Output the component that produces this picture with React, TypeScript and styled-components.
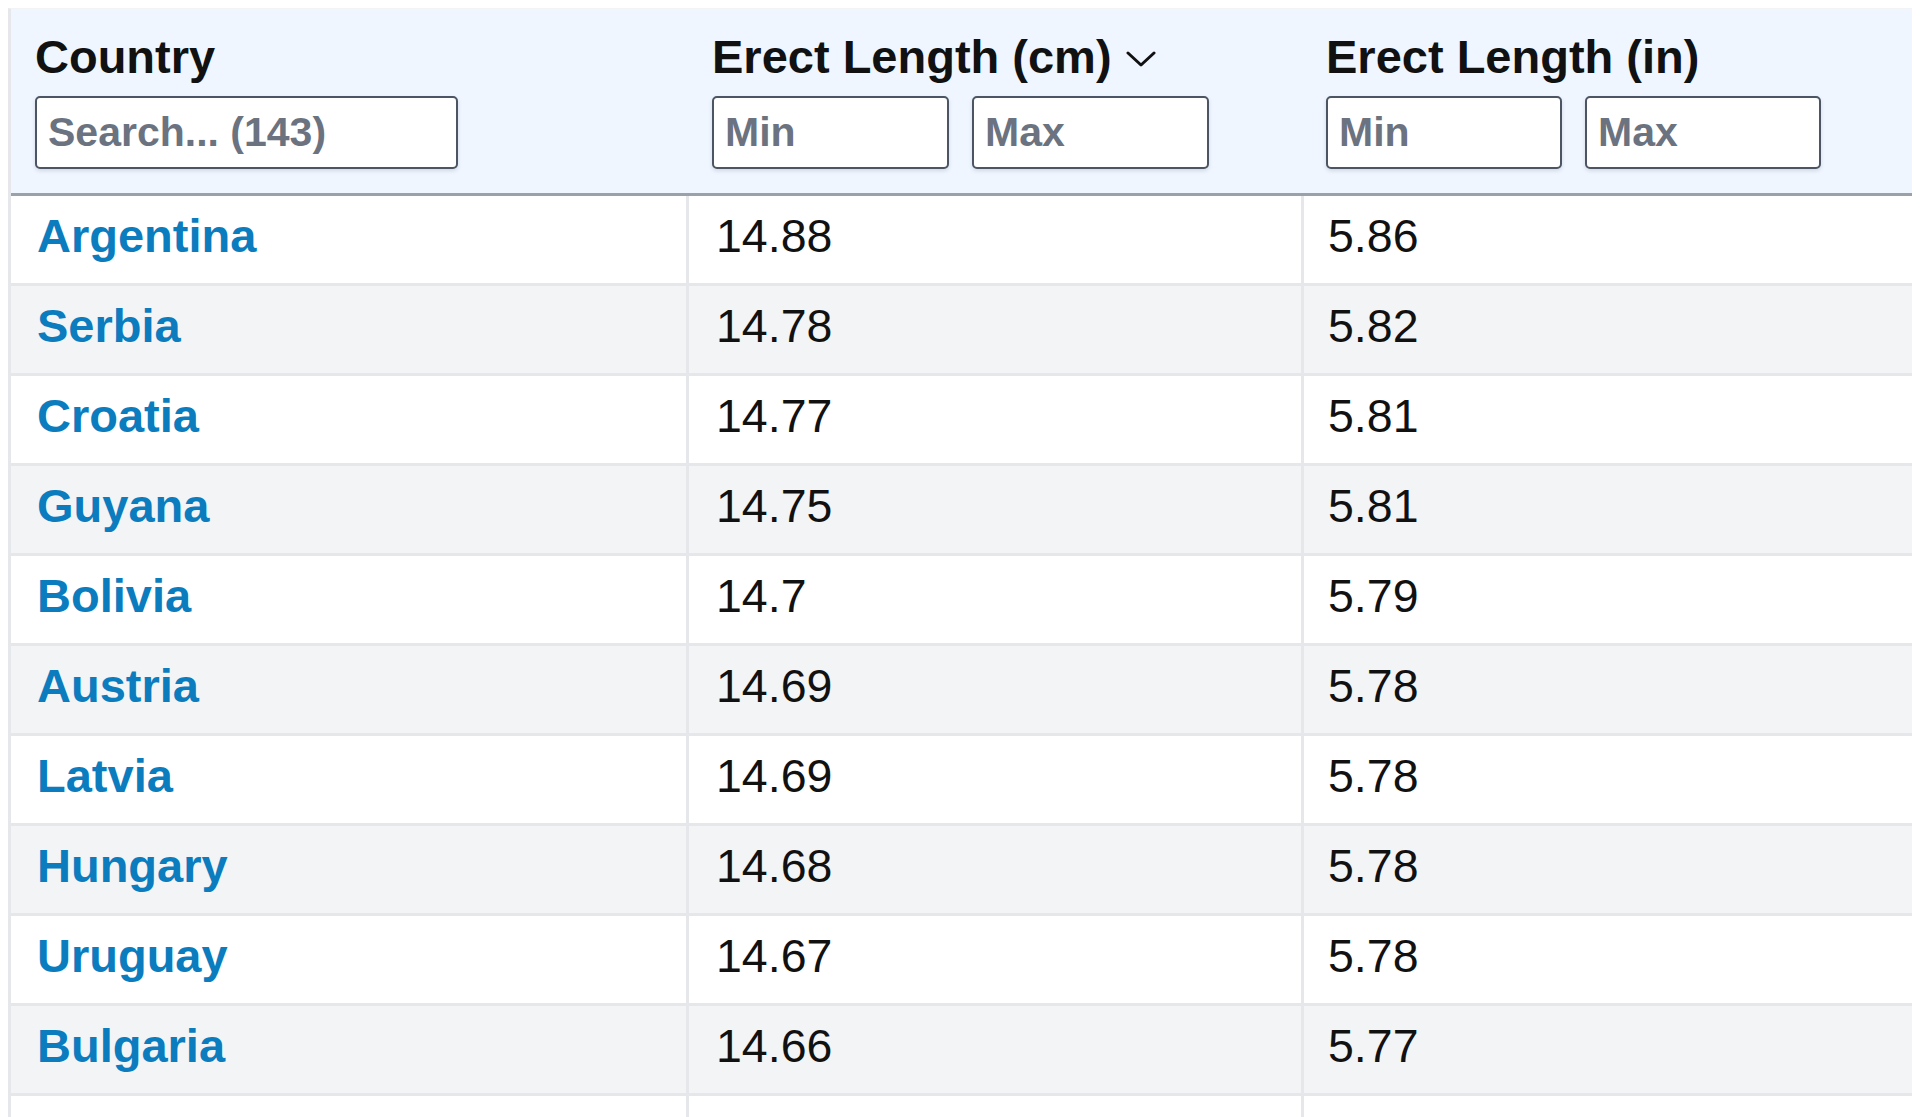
import React from "react";
import styled, { createGlobalStyle } from "styled-components";

const Global = createGlobalStyle`
  html { overflow: hidden; background: #fff; }
  body {
    margin: 8px;
    font-family: "Liberation Sans", Arial, Helvetica, sans-serif;
    color: #111;
  }
`;

const COLS = "675px 612px 609px 400px";

const Table = styled.div`
  width: max-content;
  border-left: 3px solid #e5e7eb;
  border-top: 1px solid #f1f3f5;
`;

const HeaderRow = styled.div`
  display: grid;
  grid-template-columns: ${COLS};
  column-gap: 3px;
  background: #eff6ff;
  border-bottom: 3px solid #9aa1a9;
`;

const HeaderCell = styled.div<{ $padLeft: number }>`
  display: flex;
  flex-direction: column;
  gap: 12px;
  padding: 21px 23px 24px ${(p) => p.$padLeft}px;
  min-width: 0;
`;

const Title = styled.div`
  display: flex;
  align-items: center;
  height: 54px;
  line-height: 54px;
  font-size: 47px;
  font-weight: 700;
  color: #111;
  white-space: nowrap;
`;

const SortIcon = styled.svg`
  margin-left: 14px;
  margin-top: 4px;
  flex: none;
`;

const Filters = styled.div`
  display: flex;
  gap: 23px;
`;

const FilterInput = styled.input<{ $w: number }>`
  width: ${(p) => p.$w}px;
  height: 73px;
  box-sizing: border-box;
  border: 2px solid #4b5563;
  border-radius: 5px;
  padding: 0 11px;
  font-family: "Liberation Sans", Arial, Helvetica, sans-serif;
  font-size: 41px;
  font-weight: 700;
  color: #111;
  background: #fff;
  box-shadow: 0 2px 4px rgba(0, 0, 0, 0.12);
  outline: none;
  &::placeholder {
    color: #6b7280;
    opacity: 1;
  }
`;

const Body = styled.div`
  display: flex;
  flex-direction: column;
  gap: 3px;
  background: #e5e7eb;
`;

const Row = styled.div`
  display: grid;
  grid-template-columns: ${COLS};
  column-gap: 3px;
  background: #e5e7eb;
`;

const Cell = styled.div<{ $striped: boolean; $padLeft: number }>`
  height: 87px;
  box-sizing: border-box;
  padding: 13px 0 0 ${(p) => p.$padLeft}px;
  background: ${(p) => (p.$striped ? "#f3f4f6" : "#ffffff")};
  font-size: 46.5px;
  line-height: 54px;
  color: #111;
  white-space: nowrap;
  overflow: hidden;
`;

const CountryLink = styled.a`
  color: #0b7cbe;
  font-weight: 700;
  font-size: 47px;
  text-decoration: none;
`;

const rows: [string, string, string][] = [
  ["Argentina", "14.88", "5.86"],
  ["Serbia", "14.78", "5.82"],
  ["Croatia", "14.77", "5.81"],
  ["Guyana", "14.75", "5.81"],
  ["Bolivia", "14.7", "5.79"],
  ["Austria", "14.69", "5.78"],
  ["Latvia", "14.69", "5.78"],
  ["Hungary", "14.68", "5.78"],
  ["Uruguay", "14.67", "5.78"],
  ["Bulgaria", "14.66", "5.77"],
];

export default function App() {
  return (
    <>
      <Global />
      <Table>
        <HeaderRow>
          <HeaderCell $padLeft={24}>
            <Title>Country</Title>
            <Filters>
              <FilterInput $w={423} placeholder="Search... (143)" />
            </Filters>
          </HeaderCell>
          <HeaderCell $padLeft={23}>
            <Title>
              Erect Length (cm)
              <SortIcon width="30" height="16" viewBox="0 0 30 16" aria-hidden="true">
                <polyline
                  points="2,2 15,14 28,2"
                  fill="none"
                  stroke="#111"
                  strokeWidth="3"
                  strokeLinecap="round"
                  strokeLinejoin="round"
                />
              </SortIcon>
            </Title>
            <Filters>
              <FilterInput $w={237} placeholder="Min" />
              <FilterInput $w={237} placeholder="Max" />
            </Filters>
          </HeaderCell>
          <HeaderCell $padLeft={22}>
            <Title>Erect Length (in)</Title>
            <Filters>
              <FilterInput $w={236} placeholder="Min" />
              <FilterInput $w={236} placeholder="Max" />
            </Filters>
          </HeaderCell>
          <HeaderCell $padLeft={23} />
        </HeaderRow>
        <Body>
          {rows.map(([country, cm, inch], i) => {
            const striped = i % 2 === 1;
            return (
              <Row key={country}>
                <Cell $striped={striped} $padLeft={26}>
                  <CountryLink href="#">{country}</CountryLink>
                </Cell>
                <Cell $striped={striped} $padLeft={27}>{cm}</Cell>
                <Cell $striped={striped} $padLeft={24}>{inch}</Cell>
                <Cell $striped={striped} $padLeft={23} />
              </Row>
            );
          })}
          <Row>
            <Cell $striped={false} $padLeft={26} />
            <Cell $striped={false} $padLeft={27} />
            <Cell $striped={false} $padLeft={24} />
            <Cell $striped={false} $padLeft={23} />
          </Row>
        </Body>
      </Table>
    </>
  );
}
